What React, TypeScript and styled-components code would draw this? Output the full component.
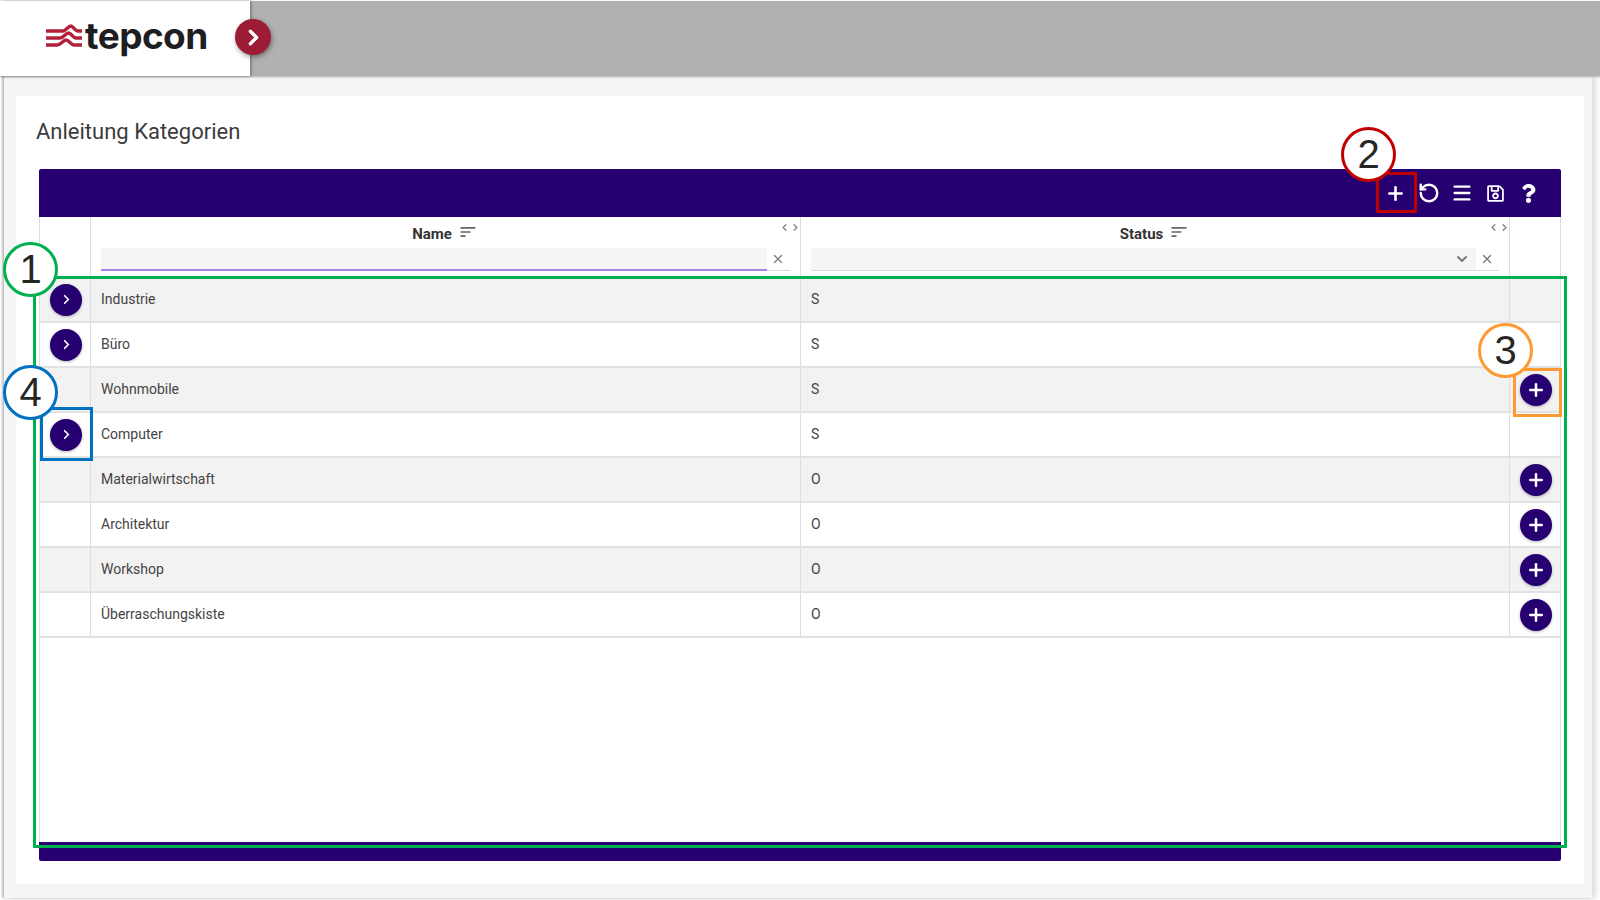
import React from "react";
import styled, { createGlobalStyle } from "styled-components";
import { ChevronLeft, ChevronRight, ChevronDown, Plus, RotateCcw, Menu, X } from "lucide-react";
import { FaQuestion, FaRegSave } from "react-icons/fa";
import { MdSort } from "react-icons/md";

const Global = createGlobalStyle`
  html, body { margin: 0; padding: 0; background: #fff; }
  * { box-sizing: border-box; }
`;

const Root = styled.div`
  position: relative;
  width: 1600px;
  height: 900px;
  overflow: hidden;
  display: flex;
  flex-direction: column;
  font-family: Roboto, "Liberation Sans", sans-serif;
  color: #444;
  background: #fff;
  padding-top: 1px;
`;

const TopBar = styled.header`
  position: relative;
  z-index: 1;
  height: 75px;
  flex: none;
  display: flex;
  background: #b1b1b1;
  box-shadow: 0 1px 2px rgba(0, 0, 0, 0.3);
`;

const Brand = styled.div`
  position: relative;
  width: 250px;
  background: #fff;
  display: flex;
  align-items: center;
  gap: 3px;
  padding: 0 0 5px 46px;
  box-shadow: 1px 0 3px rgba(0, 0, 0, 0.4);
`;

const LogoText = styled.span`
  font-family: Inter, "Liberation Sans", sans-serif;
  font-weight: 700;
  font-size: 37px;
  letter-spacing: -0.55px;
  color: #1d1d22;
  line-height: 1;
  margin-bottom: 2px;
`;

const Collapse = styled.button`
  position: absolute;
  left: 235px;
  top: 18px;
  width: 36px;
  height: 36px;
  border: 0;
  padding: 0;
  border-radius: 50%;
  background: #9c1c36;
  color: #fff;
  display: flex;
  align-items: center;
  justify-content: center;
  box-shadow: 1px 2px 5px rgba(0, 0, 0, 0.4);
`;

const Main = styled.main`
  flex: 1;
  margin: 0 8px 2px 4px;
  padding: 20px 8px 14px 12px;
  background: #f5f5f5;
  display: flex;
  box-shadow: -2px 0 2px rgba(0, 0, 0, 0.25), 4px 0 6px rgba(0, 0, 0, 0.14);
`;

const Card = styled.section`
  flex: 1;
  background: #fff;
  padding: 21px 23px 23px 23px;
  display: flex;
  flex-direction: column;
`;

const Title = styled.h1`
  margin: 0 0 22px -3px;
  font-size: 22px;
  line-height: 30px;
  font-weight: 400;
  color: #3c3c3c;
`;

const Toolbar = styled.div`
  height: 48px;
  flex: none;
  background: #260071;
  border-radius: 2px 2px 0 0;
  display: flex;
  justify-content: flex-end;
  align-items: center;
  padding-right: 16px;
  color: #fff;
`;

const ToolButton = styled.button`
  width: 33.2px;
  height: 40px;
  padding: 0;
  border: 0;
  background: transparent;
  color: #fff;
  display: flex;
  align-items: center;
  justify-content: center;
`;

const Grid = styled.div`
  flex: 1;
  border-left: 1px solid #ddd;
  border-right: 1px solid #ddd;
  display: flex;
  flex-direction: column;
  min-height: 0;
`;

const Columns = styled.div`
  display: grid;
  grid-template-columns: 51px 710px 709px 1fr;
`;

const Head = styled(Columns)`
  height: 61px;
  flex: none;
`;

const HeadCell = styled.div`
  position: relative;
  border-right: 1px solid #ddd;
  padding: 0 10px 0 10px;
  display: flex;
  flex-direction: column;
  &:last-child {
    border-right: 0;
  }
`;

const HeadLabel = styled.div`
  height: 29px;
  display: flex;
  align-items: flex-end;
  justify-content: center;
  gap: 6px;
  padding-right: 1px;
  font-size: 15px;
  font-weight: 700;
  color: #333;
  line-height: 24px;
`;

const SortIcon = styled(MdSort)`
  color: #666;
  margin-bottom: 4px;
`;

const Resize = styled.div`
  position: absolute;
  right: -1px;
  top: 5px;
  display: flex;
  color: #7f8590;
`;

const FilterRow = styled.div`
  margin-top: 2px;
  display: flex;
  height: 23px;
  align-items: stretch;
  border-bottom: 1px solid #d9d9d9;
`;

const FilterBox = styled.div<{ $active?: boolean }>`
  flex: 1;
  background: #f5f5f5;
  margin-bottom: -1px;
  border-bottom: ${(p) => (p.$active ? "2px solid #a585e6" : "1px solid #d9d9d9")};
  display: flex;
  align-items: center;
  justify-content: flex-end;
  padding-right: 6px;
  color: #777;
`;

const ClearBox = styled.div`
  width: 23px;
  display: flex;
  align-items: center;
  justify-content: center;
  padding-right: 2px;
  color: #7d7d7d;
`;

const Row = styled(Columns)<{ $odd: boolean }>`
  height: 45px;
  flex: none;
  background: ${(p) => (p.$odd ? "#f2f2f2" : "#fff")};
  border-bottom: 2px solid #e2e2e2;
`;

const Cell = styled.div`
  border-right: 1px solid #ddd;
  display: flex;
  align-items: center;
  font-size: 14px;
  padding: 0 0 2px 10px;
  color: #444;
  &:last-child {
    border-right: 0;
  }
`;

const ActionCell = styled(Cell)`
  padding: 0 0 0 10px;
`;

const RoundButton = styled.button`
  width: 32px;
  height: 32px;
  padding: 0;
  border: 0;
  border-radius: 50%;
  background: #260071;
  color: #fff;
  display: flex;
  align-items: center;
  justify-content: center;
  box-shadow: 0 1px 3px rgba(0, 0, 0, 0.3);
`;

const FooterBar = styled.div`
  height: 19px;
  flex: none;
  background: #260071;
  border-radius: 0 0 2px 2px;
`;

const Frame = styled.div<{ $x: number; $y: number; $w: number; $h: number; $c: string }>`
  position: absolute;
  z-index: 2;
  left: ${(p) => p.$x}px;
  top: ${(p) => p.$y}px;
  width: ${(p) => p.$w}px;
  height: ${(p) => p.$h}px;
  border: 3px solid ${(p) => p.$c};
  pointer-events: none;
`;

const Badge = styled.div<{ $x: number; $y: number; $c: string }>`
  position: absolute;
  z-index: 2;
  left: ${(p) => p.$x}px;
  top: ${(p) => p.$y}px;
  width: 55px;
  height: 55px;
  border-radius: 50%;
  border: 3px solid ${(p) => p.$c};
  background: #fff;
  display: flex;
  align-items: center;
  justify-content: center;
  font-family: "Liberation Sans", Arial, sans-serif;
  font-size: 40px;
  color: #262626;
`;

const rows: { name: string; status: string; expand: boolean; add: boolean }[] = [
  { name: "Industrie", status: "S", expand: true, add: false },
  { name: "Büro", status: "S", expand: true, add: false },
  { name: "Wohnmobile", status: "S", expand: false, add: true },
  { name: "Computer", status: "S", expand: true, add: false },
  { name: "Materialwirtschaft", status: "O", expand: false, add: true },
  { name: "Architektur", status: "O", expand: false, add: true },
  { name: "Workshop", status: "O", expand: false, add: true },
  { name: "Überraschungskiste", status: "O", expand: false, add: true },
];

const LogoMark = () => (
  <svg width="36" height="24" viewBox="0 0 36 24" fill="none" stroke="#b3203a" strokeWidth="3.4">
    <path d="M0 7H17C20 7 22 2 25 2C27 2 29 7 32 7H36" />
    <path d="M0 14H14C18 14 19 9 23 9C25 9 27 14 30 14H36" />
    <path d="M0 21H11C15 21 17 16 20 16C23 16 25 21 28 21H36" />
  </svg>
);

export default function App() {
  return (
    <Root>
      <Global />
      <TopBar>
        <Brand>
          <LogoMark />
          <LogoText>tepcon</LogoText>
          <Collapse aria-label="Menü">
            <ChevronRight size={25} strokeWidth={3.2} />
          </Collapse>
        </Brand>
      </TopBar>
      <Main>
        <Card>
          <Title>Anleitung Kategorien</Title>
          <Toolbar>
            <ToolButton><Plus size={21} strokeWidth={3} /></ToolButton>
            <ToolButton><RotateCcw size={22} strokeWidth={2.6} /></ToolButton>
            <ToolButton><Menu size={22} strokeWidth={2.6} /></ToolButton>
            <ToolButton><FaRegSave size={19} /></ToolButton>
            <ToolButton><FaQuestion size={19} /></ToolButton>
          </Toolbar>
          <Grid>
            <Head>
              <HeadCell />
              <HeadCell>
                <HeadLabel>Name <SortIcon size={20} /></HeadLabel>
                <Resize><ChevronLeft size={11} strokeWidth={3} /><ChevronRight size={11} strokeWidth={3} /></Resize>
                <FilterRow>
                  <FilterBox $active />
                  <ClearBox><X size={14} strokeWidth={2.4} /></ClearBox>
                </FilterRow>
              </HeadCell>
              <HeadCell>
                <HeadLabel>Status <SortIcon size={20} /></HeadLabel>
                <Resize><ChevronLeft size={11} strokeWidth={3} /><ChevronRight size={11} strokeWidth={3} /></Resize>
                <FilterRow>
                  <FilterBox><ChevronDown size={16} strokeWidth={2.8} /></FilterBox>
                  <ClearBox><X size={14} strokeWidth={2.4} /></ClearBox>
                </FilterRow>
              </HeadCell>
              <HeadCell />
            </Head>
            {rows.map((r, i) => (
              <Row key={r.name} $odd={i % 2 === 0}>
                <ActionCell>{r.expand && <RoundButton><ChevronRight size={15} strokeWidth={2.8} /></RoundButton>}</ActionCell>
                <Cell>{r.name}</Cell>
                <Cell>{r.status}</Cell>
                <ActionCell>{r.add && <RoundButton><Plus size={20} strokeWidth={3} /></RoundButton>}</ActionCell>
              </Row>
            ))}
          </Grid>
          <FooterBar />
        </Card>
      </Main>
      <Frame $x={33} $y={276} $w={1534} $h={572} $c="#00b050" />
      <Frame $x={1376} $y={172} $w={41} $h={41} $c="#c00000" />
      <Frame $x={1513} $y={368} $w={49} $h={49} $c="#ff9a33" />
      <Frame $x={40} $y={407} $w={53} $h={54} $c="#0070c0" />
      <Badge $x={3} $y={242} $c="#00b050">1</Badge>
      <Badge $x={1341} $y={127} $c="#c00000">2</Badge>
      <Badge $x={1478} $y={323} $c="#ff9a33">3</Badge>
      <Badge $x={3} $y={365} $c="#0070c0">4</Badge>
    </Root>
  );
}
